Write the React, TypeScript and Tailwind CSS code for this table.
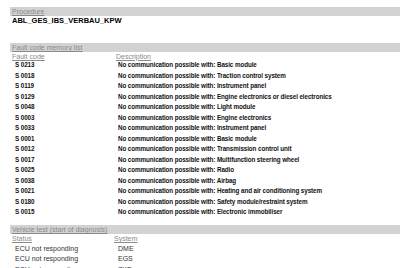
const faults = [
  ["S 0213", "Basic module"],
  ["S 0018", "Traction control system"],
  ["S 0119", "Instrument panel"],
  ["S 0129", "Engine electronics or diesel electronics"],
  ["S 0048", "Light module"],
  ["S 0003", "Engine electronics"],
  ["S 0033", "Instrument panel"],
  ["S 0001", "Basic module"],
  ["S 0012", "Transmission control unit"],
  ["S 0017", "Multifunction steering wheel"],
  ["S 0025", "Radio"],
  ["S 0038", "Airbag"],
  ["S 0021", "Heating and air conditioning system"],
  ["S 0180", "Safety module/restraint system"],
  ["S 0015", "Electronic immobiliser"],
];

const tests = [
  ["ECU not responding", "DME"],
  ["ECU not responding", "EGS"],
  ["ECU not responding", "ZKE"],
];

const Bar = ({ title }: { title: string }) => (
  <div className="ml-[10px] flex h-[9px] items-center bg-[#d2d2d2] pl-[2px] text-[#8a8a8a] underline decoration-[0.5px]">
    {title}
  </div>
);

export default function App() {
  return (
    <div className="h-[268px] w-[400px] overflow-hidden bg-white pt-[7px] text-[7px] leading-none font-['Liberation_Sans',Arial,sans-serif]">
      <Bar title="Procedure" />
      <div className="flex h-[10px] items-center pl-[12px] text-[7.5px] font-bold text-black">
        ABL_GES_IBS_VERBAU_KPW
      </div>
      <div className="h-[17px]" />
      <Bar title="Fault code memory list" />
      <div className="flex h-[8px] items-center pl-[12px] text-[#8a8a8a] underline decoration-[0.5px]">
        <div className="w-[104px]">Fault code</div>
        <div>Description</div>
      </div>
      {faults.map(([code, desc]) => (
        <div key={code} className="flex h-[10.5px] items-center pl-[15px] text-[6.3px] font-bold tracking-[-0.1px] text-[#111]">
          <div className="w-[103px]">{code}</div>
          <div>No communication possible with: {desc}</div>
        </div>
      ))}
      <div className="h-[7.5px]" />
      <Bar title="Vehicle test (start of diagnosis)" />
      <div className="flex h-[9px] items-center pl-[12px] text-[#8a8a8a] underline decoration-[0.5px]">
        <div className="w-[102px]">Status</div>
        <div>System</div>
      </div>
      {tests.map(([status, sys], i) => (
        <div key={i} className="flex h-[10.5px] items-center pl-[15px] text-[#333]">
          <div className="w-[103px]">{status}</div>
          <div>{sys}</div>
        </div>
      ))}
    </div>
  );
}
